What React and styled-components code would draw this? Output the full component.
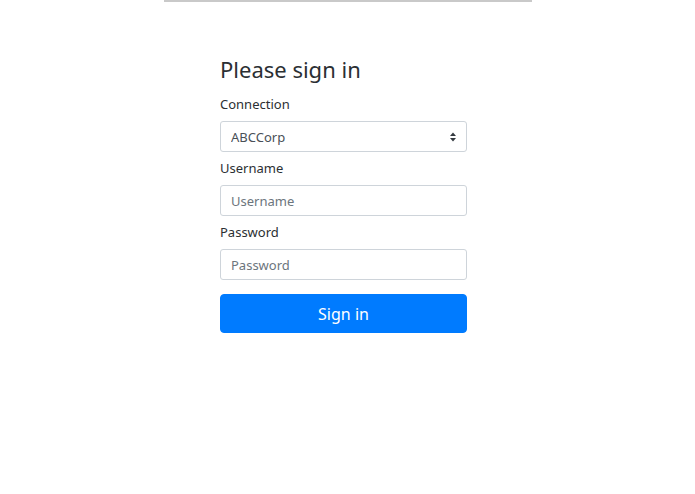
import styled, { createGlobalStyle } from "styled-components"

const GlobalStyle = createGlobalStyle`
  html, body {
    margin: 0;
    padding: 0;
    background: #fff;
  }
  body {
    font-family: "Noto Sans", "Open Sans", sans-serif;
    color: #212529;
  }
  * { box-sizing: border-box; }
`

const fields = [
  { label: "Connection", type: "select", options: ["ABCCorp"] },
  { label: "Username", type: "text" },
  { label: "Password", type: "password" },
]

const App = () => {
  return (
    <Page>
      <GlobalStyle />
      <TopRule />
      <Form onSubmit={(e) => e.preventDefault()}>
        <Title>Please sign in</Title>
        {fields.map((f) =>
          <Group key={f.label}>
            <Label>{f.label}</Label>
            {f.type === "select" ?
              <SelectWrap>
                <Select defaultValue={f.options[0]}>
                  {f.options.map((o) => <option key={o}>{o}</option>)}
                </Select>
                <Caret viewBox="0 0 8 12">
                  <path d="M4 1.5 L7 5 L1 5 Z" fill="#343a40" />
                  <path d="M4 10.5 L7 7 L1 7 Z" fill="#343a40" />
                </Caret>
              </SelectWrap>
              :
              <Input type={f.type} placeholder={f.label} />
            }
          </Group>
        )}
        <Button type="submit">Sign in</Button>
      </Form>
    </Page>
  )
}

const Page = styled.div`
    display: flex;
    flex-direction: column;
    align-items: center;
    min-height: 494px;
  `

const TopRule = styled.div`
    width: 368px;
    height: 2px;
    background-color: #c9c9c9;
  `

const Form = styled.form`
    width: 247px;
    margin: 53px 8px 0 0;
    display: flex;
    flex-direction: column;
  `

const Title = styled.h3`
    margin: 0 0 8px 0;
    font-size: 22px;
    font-weight: 400;
    line-height: 29px;
    color: #2b2f33;
  `

const Group = styled.div`
    display: flex;
    flex-direction: column;
    margin-bottom: 4px;
  `

const Label = styled.label`
    font-size: 13px;
    line-height: 21px;
    padding-top: 2px;
    margin-bottom: 6px;
    color: #2b2f33;
  `

const SelectWrap = styled.div`
    position: relative;
  `

const fieldBase = `
    width: 100%;
    height: 31px;
    padding: 0 10px;
    font-family: inherit;
    font-size: 13px;
    color: #495057;
    background-color: #fff;
    border: 1px solid #ced4da;
    border-radius: 3px;
    outline: none;
  `

const Select = styled.select`
    ${fieldBase}
    appearance: none;
  `

const Caret = styled.svg`
    position: absolute;
    right: 10px;
    top: 10px;
    width: 8px;
    height: 12px;
    pointer-events: none;
  `

const Input = styled.input`
    ${fieldBase}
    &::placeholder {
      color: #6c757d;
    }
  `

const Button = styled.button`
    margin-top: 10px;
    height: 39px;
    width: 100%;
    background-color: #007bff;
    color: #fff;
    border: 1px solid #007bff;
    border-radius: 4px;
    font-family: inherit;
    font-size: 16px;
    cursor: pointer;
  `

export default App
